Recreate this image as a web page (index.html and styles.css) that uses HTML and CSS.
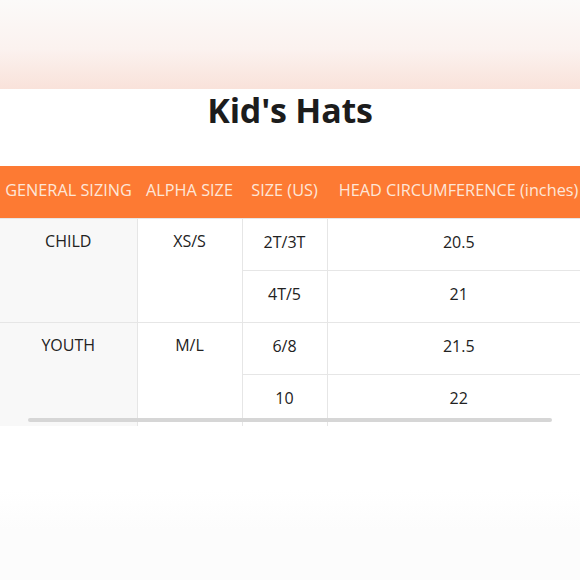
FILE: index.html
```html
<!DOCTYPE html>
<html>
<head>
<meta charset="utf-8">
<link rel="stylesheet" href="styles.css">
</head>
<body>
<div class="banner"></div>
<h1 class="title">Kid's Hats</h1>
<div class="table-wrap">
  <table class="size-table">
    <colgroup>
      <col class="c1"><col class="c2"><col class="c3"><col class="c4">
    </colgroup>
    <thead>
      <tr>
        <th>GENERAL SIZING</th>
        <th>ALPHA SIZE</th>
        <th>SIZE (US)</th>
        <th>HEAD CIRCUMFERENCE (inches)</th>
      </tr>
    </thead>
    <tbody>
      <tr>
        <td class="general" rowspan="2">CHILD</td>
        <td class="alpha" rowspan="2">XS/S</td>
        <td>2T/3T</td>
        <td>20.5</td>
      </tr>
      <tr>
        <td>4T/5</td>
        <td>21</td>
      </tr>
      <tr>
        <td class="general" rowspan="2">YOUTH</td>
        <td class="alpha" rowspan="2">M/L</td>
        <td>6/8</td>
        <td>21.5</td>
      </tr>
      <tr class="last">
        <td>10</td>
        <td>22</td>
      </tr>
    </tbody>
  </table>
  <div class="scrollbar"></div>
</div>
<div class="footer-wave"></div>
</body>
</html>
```
FILE: styles.css
```css
html, body {
  margin: 0;
  padding: 0;
  background: #ffffff;
  width: 580px;
  height: 580px;
  overflow: hidden;
  font-family: "Open Sans", "Noto Sans", sans-serif;
}

.banner {
  height: 89px;
  background: linear-gradient(to bottom, #fbfaf9 0%, #fbf2ef 55%, #f9e2da 100%);
}

.title {
  margin: 0;
  height: 77px;
  padding-top: 1px;
  box-sizing: border-box;
  text-align: center;
  font-size: 34px;
  font-weight: 700;
  color: #1c1c1c;
  line-height: 40px;
  letter-spacing: -0.2px;
}

.table-wrap {
  position: relative;
  width: 580px;
  overflow: hidden;
}

.size-table {
  border-collapse: collapse;
  table-layout: fixed;
  width: 590px;
  font-size: 16px;
  color: #222222;
}

.c1 { width: 137px; }
.c2 { width: 105px; }
.c3 { width: 85px; }
.c4 { width: 263px; }

.size-table th {
  box-sizing: border-box;
  background: #fd7a33;
  color: #fde6d8;
  font-weight: 400;
  height: 52px;
  padding: 0 0 4px;
  text-align: center;
  white-space: nowrap;
  font-size: 16.3px;
}

.size-table td {
  box-sizing: border-box;
  height: 52px;
  padding: 0 0 4px;
  text-align: center;
  vertical-align: middle;
  border: 1px solid #e6e6e6;
  background: #ffffff;
}

.size-table td.general,
.size-table td.alpha {
  vertical-align: top;
  padding-top: 11px;
}

.size-table td.general {
  background: #f8f8f8;
  border-left: none;
}

.size-table tr td:last-child {
  border-right: none;
}

.size-table tr.last td {
  border-bottom: none;
}

.size-table tbody tr:nth-child(3) td.general,
.size-table tbody tr:nth-child(3) td.alpha {
  border-bottom: none;
}

.scrollbar {
  position: absolute;
  left: 28px;
  width: 524px;
  bottom: 4px;
  height: 4px;
  border-radius: 2px;
  background: #d6d6d6;
}

.footer-wave {
  margin-top: 64px;
  height: 100px;
  background: linear-gradient(to bottom, #ffffff 0%, #fcfcfc 40%, #fcfcfc 100%);
}
```
